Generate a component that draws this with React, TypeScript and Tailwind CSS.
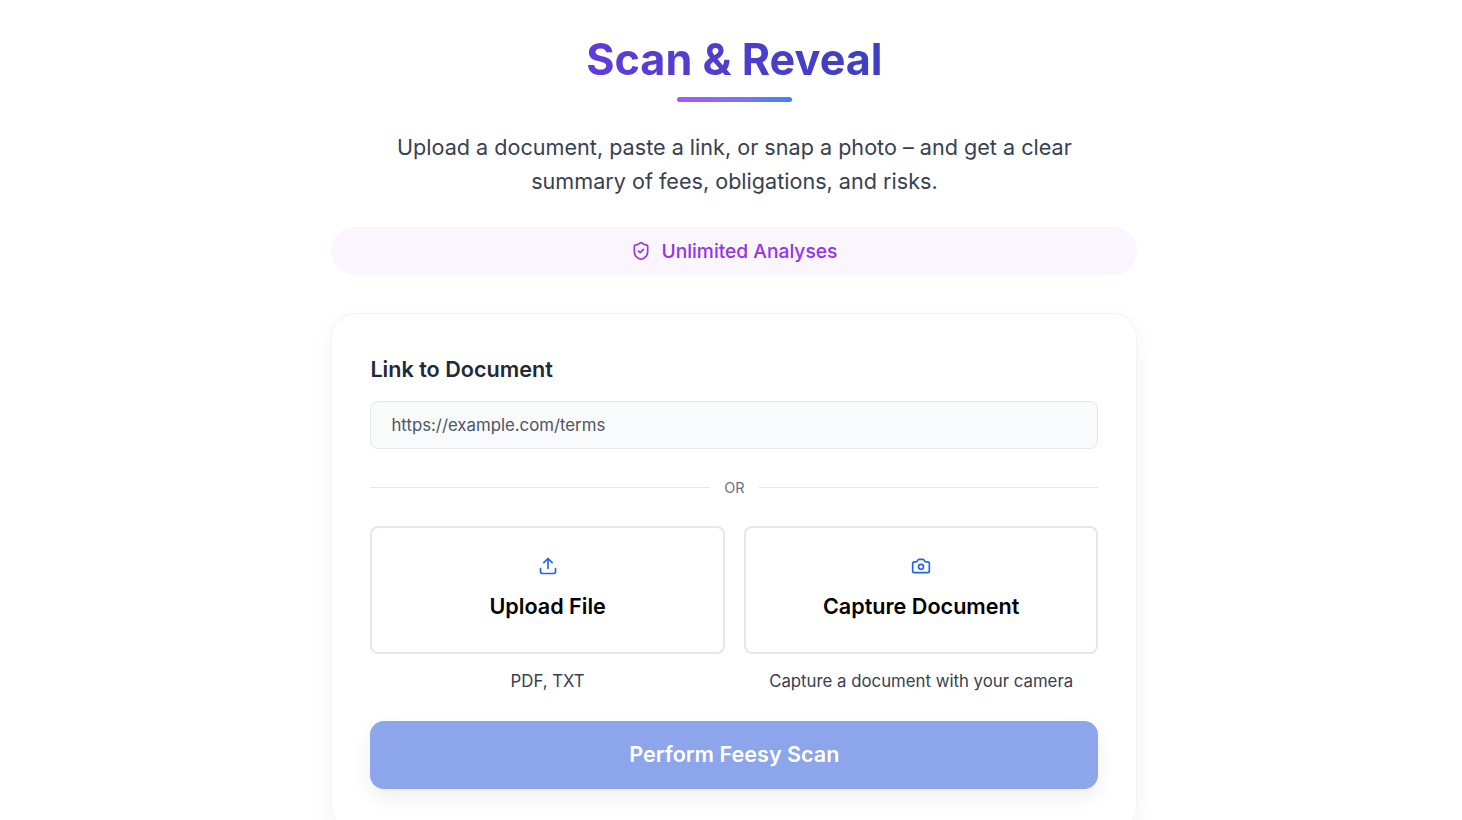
import { Camera, ShieldCheck, Upload } from "lucide-react";

function OptionCard({ icon, title, hint }: { icon: React.ReactNode; title: string; hint: string }) {
  return (
    <div className="flex-1">
      <button className="flex h-[128px] w-full flex-col items-center rounded-lg border-2 border-[#e5e7eb] bg-white pt-[28px]">
        {icon}
        <span className="mt-[15px] text-[21.6px] leading-[30px] font-semibold text-black">{title}</span>
      </button>
      <p className="mt-[17px] text-center text-[16.8px] leading-[20px] text-[#374151]">{hint}</p>
    </div>
  );
}

export default function App() {
  return (
    <div className="h-screen overflow-hidden bg-white pl-[6.8px] font-['Inter',sans-serif]">
      <div className="mx-auto flex w-[806px] flex-col items-center">
        <h1 className="mt-[32px] bg-gradient-to-r from-[#5f3bdb] to-[#3d3fc0] bg-clip-text text-[43.2px] leading-[55px] font-bold text-transparent">
          Scan &amp; Reveal
        </h1>
        <div className="mt-[10px] h-[5px] w-[115px] rounded-full bg-gradient-to-r from-[#a855f7] to-[#3b82f6]" />
        <p className="mt-[28px] w-[720px] text-center text-[21.6px] leading-[34px] text-[#374151]">
          Upload a document, paste a link, or snap a photo – and get a clear summary of fees, obligations, and risks.
        </p>
        <div className="mt-[29px] flex h-[48px] w-full items-center justify-center gap-[10px] rounded-full bg-[#faf5ff] text-[19.2px] font-medium text-[#9333ea]">
          <ShieldCheck size={20} strokeWidth={2} />
          <span>Unlimited Analyses</span>
        </div>
        <div className="mt-[38px] w-full rounded-3xl border border-[#f3f4f6] bg-white px-[38px] pt-[38px] pb-[40px] shadow-[0_10px_25px_rgba(0,0,0,0.05)]">
          <label className="block text-[21.6px] leading-[34px] font-semibold text-[#1f2937]">Link to Document</label>
          <input
            className="mt-[15px] block h-[48px] w-full rounded-lg border border-[#e5e7eb] bg-[#f9fafb] px-[20px] text-[16.8px] text-[#374151] placeholder:text-[#4b5563]"
            placeholder="https://example.com/terms"
          />
          <div className="mt-[29px] flex h-[19px] items-center gap-[14px]">
            <div className="h-px flex-1 bg-[#e5e7eb]" />
            <span className="text-[14.4px] leading-[20px] text-[#6b7280]">OR</span>
            <div className="h-px flex-1 bg-[#e5e7eb]" />
          </div>
          <div className="mt-[29px] flex gap-[19px]">
            <OptionCard icon={<Upload size={20} className="text-[#2563eb]" />} title="Upload File" hint="PDF, TXT" />
            <OptionCard
              icon={<Camera size={20} className="text-[#2563eb]" />}
              title="Capture Document"
              hint="Capture a document with your camera"
            />
          </div>
          <button className="mt-[30px] block h-[68px] w-full rounded-[14px] bg-[#8ca5eb] pb-[2px] text-[21.6px] font-semibold text-white shadow-[0_8px_20px_rgba(0,0,0,0.07)]">
            Perform Feesy Scan
          </button>
        </div>
      </div>
    </div>
  );
}
